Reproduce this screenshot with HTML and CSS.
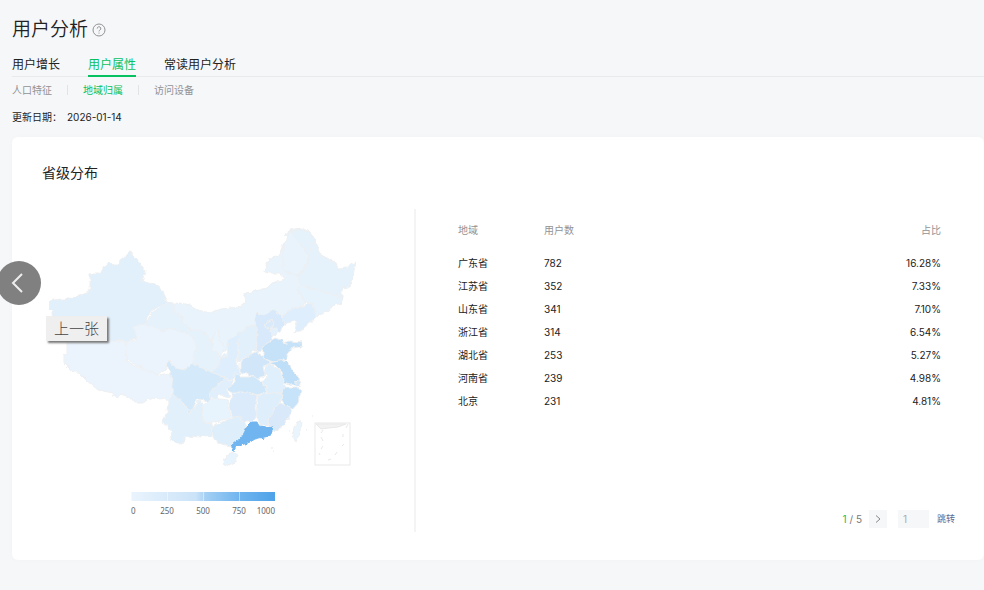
FILE: index.html
```html
<!DOCTYPE html>
<html lang="zh-CN">
<head>
<meta charset="utf-8">
<title>用户分析</title>
<link rel="stylesheet" href="styles.css">
</head>
<body>
<div class="page">
  <header class="page-head">
    <h1>用户分析</h1>
    <svg class="help" viewBox="0 0 14 14" role="img" aria-label="帮助"><circle cx="7" cy="7" r="6"/><path d="M5.2 5.6a1.8 1.8 0 1 1 2.7 1.5c-.6.4-.9.6-.9 1.3"/><path d="M7 9.6v1"/></svg>
  </header>
  <nav class="tabs">
    <a href="#growth">用户增长</a>
    <a href="#attr" class="active">用户属性</a>
    <a href="#regular">常读用户分析</a>
  </nav>
  <nav class="subtabs">
    <a href="#people">人口特征</a>
    <a href="#region" class="active">地域归属</a>
    <a href="#device">访问设备</a>
  </nav>
  <p class="updated"><span>更新日期：</span><time>2026-01-14</time></p>

  <main class="card">
    <h2>省级分布</h2>
    <div class="panes">
      <section class="map-pane">
        <svg class="map" viewBox="42 220 320 252" role="img" aria-label="省级分布地图">
          <defs>
            <filter id="coast" x="0" y="0" width="1" height="1" color-interpolation-filters="sRGB">
              <feTurbulence type="fractalNoise" baseFrequency="0.18" numOctaves="2" seed="4" result="n"/>
              <feDisplacementMap in="SourceGraphic" in2="n" scale="5" xChannelSelector="R" yChannelSelector="G"/>
            </filter>
          </defs>
          <g class="land" filter="url(#coast)">
            <path fill="#e8f3fc" d="M167 303L180 303 190 305 198 310 210 313 220 309 240 307 246 302 244 293 252 292 267 288 272 283 285 279 280 273 270 273 264 272 269 258 278 257 283 245 287 238 284 235 290 230 300 228 311 240 309 265 300 280 306 303 285 315 276 325 260 340 235 350 215 350 190 335 172 328z"/>
            <path fill="#e5f2fb" d="M300 228L310 232 316 243 321 255 335 262 338 268 347 267 356 262 353 275 350 287 342 288 342 298 323 292 300 285 298 277 307 265 309 252 300 241 290 233z"/>
            <path fill="#e8f3fc" d="M290 230L300 243 308 252 307 262 298 276 283 270 283 245 287 238z"/>
            <path fill="#e5f2fb" d="M300 228L310 232 316 243 309 244 311 250 308 255 300 243 290 233z"/>
            <path fill="#e6f2fc" d="M300 285L323 292 342 298 342 303 335 305 327 312 317 317 313 305 305 302 297 288z"/>
            <path fill="#dfeefc" d="M282 317L285 312 305 305 313 303 316 317 305 327 294 333 296 327 297 321 293 320 287 325 283 325z"/>
            <path fill="#e2f0fb" d="M49 303L53 300 62 299 67 299 75 297 87 293 90 287 90 274 101 274 107 263 113 264 119 264 121 257 126 256 128 252 132 253 133 257 141 263 145 272 142 281 155 285 163 291 167 303 155 308 147 317 146 325 133 327 137 337 128 342 110 340 67 341 57 325 53 315 53 310 49 309z"/>
            <path fill="#ebf4fd" d="M67 339L100 338 125 342 126 355 127 362 147 370 160 375 170 373 173 380 173 395 168 402 165 398 160 399 153 397 142 403 135 403 130 397 120 394 115 398 113 393 98 390 87 381 78 372 73 372 64 363 64 355 67 353z"/>
            <path fill="#e5f2fc" d="M147 320L153 312 167 302 173 303 175 313 183 317 182 322 192 330 203 330 206 335 211 343 220 357 228 352 225 365 217 368 213 374 205 370 194 366 186 340 160 330 146 326z"/>
            <path fill="#ebf4fd" d="M133 327L146 324 158 328 162 331 172 328 182 332 193 338 197 345 193 357 194 363 188 370 182 371 173 368 170 361 167 365 165 371 157 374 147 370 127 360 125 343 135 340 136 333z"/>
            <path fill="#e9f4fc" d="M215 332L220 330 219 340 225 347 220 357 213 350 212 340z"/>
            <path fill="#deeefc" d="M238 332L243 331 238 345 237 362 240 373 232 380 225 378 213 373 217 366 220 360 228 357 227 342 232 338z"/>
            <path fill="#e2f0fb" d="M245 328L257 323 257 340 255 350 250 355 238 362 238 345 241 332z"/>
            <path fill="#d7e9fa" d="M257 313L263 315 274 309 277 313 282 318 284 324 280 331 277 332 272 338 263 350 255 351 257 335 255 320z"/>
            <path fill="#d9ebfa" d="M267 322L272 319 274 324 270 329 265 328z"/>
            <path fill="#e4f1fc" d="M271 328L276 327 277 335 272 336z"/>
            <path fill="#c5e2f9" d="M263 348L267 343 275 338 282 340 284 344 290 342 302 343 300 347 292 348 285 357 282 361 273 362 263 358z"/>
            <path fill="#d1e7f9" d="M240 362L250 355 258 351 262 357 272 363 263 367 265 376 257 378 240 372z"/>
            <path fill="#d4e9fa" d="M167 365L169 361 175 368 185 370 193 363 205 369 213 373 225 378 213 390 210 397 212 402 198 399 190 413 182 403 173 395 173 380z"/>
            <path fill="#e2f0fb" d="M170 397L174 394 182 403 190 413 200 400 205 408 203 422 210 422 213 430 212 436 203 437 184 436 184 443 180 444 170 440 172 432 168 426 162 423 167 413 168 403z"/>
            <path fill="#e1effc" d="M225 378L233 382 227 390 230 397 220 395 215 400 208 395 212 390z"/>
            <path fill="#d1e7fa" d="M235 372L240 377 255 377 263 383 267 392 257 395 247 392 230 392 227 388 235 383z"/>
            <path fill="#e0effc" d="M268 363L280 370 283 382 287 388 280 395 268 392 263 382 267 377 263 372z"/>
            <path fill="#bfdff8" d="M268 363L285 360 290 365 293 372 299 378 300 383 293 385 283 382 282 372 275 365z"/>
            <path fill="#d3e8fa" d="M295 380L301 382 300 386 295 385z"/>
            <path fill="#c7e3f9" d="M285 387L298 387 301 392 298 402 292 409 285 405 280 397z"/>
            <path fill="#e8f4fd" d="M202 405L213 398 228 400 231 417 213 423 203 422z"/>
            <path fill="#dbebfb" d="M232 393L247 392 257 395 255 407 257 415 252 422 243 422 240 417 232 417 230 405z"/>
            <path fill="#dfeefb" d="M258 395L272 392 283 395 280 403 273 412 270 425 260 425 256 412z"/>
            <path fill="#d9e9fa" d="M280 403L285 405 292 409 288 420 275 432 268 424 272 412z"/>
            <path fill="#deeefb" d="M212 427L230 418 240 416 246 427 242 437 232 446 217 443 213 437z"/>
            <path fill="#70b5ef" stroke="#70b5ef" d="M252 422L257 422 259 426 266 427 272 426 273 432 268 436 255 439 250 442 235 447 234 452 232 451 232 445 242 437 247 427z"/>
            <path fill="#e7f3fd" d="M226 456L233 453 238 455 234 463 228 466 224 463z"/>
            <path fill="#e9f4fd" d="M299 421L302 422 301 430 296 441 292 436 294 427z"/>
          </g>
          <g class="islands">
            <path d="M272 447v2M273 451h1M312 416h1M289 431h1M306 430h1"/>
            <rect x="315" y="423" width="35" height="42"/>
            <path class="shore" d="M316 424h30l-8 3-10 1-7 1z"/>
            <path d="M348 424l-2 4M323 430l-2 3M321 437l2 4M323 446l-2 3M319 453l1 2M328 460l3-1M335 455l2-3M342 446l2-2M343 437v-3"/>
          </g>
        </svg>
        <div class="legend">
          <div class="legend-bar"><i></i><i></i><i></i><i></i></div>
          <div class="legend-labels"><span>0</span><span>250</span><span>500</span><span>750</span><span>1000</span></div>
        </div>
      </section>
      <section class="table-pane">
        <table>
          <thead><tr><th>地域</th><th>用户数</th><th>占比</th></tr></thead>
          <tbody>
            <tr><td>广东省</td><td>782</td><td>16.28%</td></tr>
            <tr><td>江苏省</td><td>352</td><td>7.33%</td></tr>
            <tr><td>山东省</td><td>341</td><td>7.10%</td></tr>
            <tr><td>浙江省</td><td>314</td><td>6.54%</td></tr>
            <tr><td>湖北省</td><td>253</td><td>5.27%</td></tr>
            <tr><td>河南省</td><td>239</td><td>4.98%</td></tr>
            <tr><td>北京</td><td>231</td><td>4.81%</td></tr>
          </tbody>
        </table>
        <div class="pager">
          <span class="count"><b>1</b> / 5</span>
          <button type="button" class="next" aria-label="下一页"><svg viewBox="0 0 8 10"><path d="M2 1.500L6 5 2 8.500"/></svg></button>
          <input type="text" value="1" aria-label="页码">
          <a href="#jump">跳转</a>
        </div>
      </section>
    </div>
  </main>
  <button type="button" class="prev" aria-label="上一张" aria-describedby="tip"><svg viewBox="0 0 12 22"><path d="M11 2L2 11l9 9"/></svg></button>
  <div class="tooltip" role="tooltip" id="tip">上一张</div>
</div>
</body>
</html>
```
FILE: styles.css
```css
* { box-sizing: border-box; }
body {
  margin: 0;
  min-height: 100vh;
  background: #f6f7f9;
  color: #222;
  font: 10px/20px Inter, "Noto Sans CJK SC", sans-serif;
}
h1, h2, p { margin: 0; font-weight: 400; }
a { color: inherit; text-decoration: none; }
.page { position: relative; padding: 17px 0 30px 12px; overflow: hidden; }
.page-head { display: flex; align-items: center; gap: 4px; }
h1 { font-size: 19px; line-height: 26px; font-weight: 350; }
.help { width: 14px; height: 14px; fill: none; stroke: #929395; stroke-width: 1; }
.tabs { display: flex; gap: 28px; margin-top: 12px; border-bottom: 1px solid #e9eaec; font-size: 12px; line-height: 20px; }
.tabs a { margin-bottom: -1px; border-bottom: 2px solid transparent; }
.tabs .active { color: #07c160; border-color: #07c160; }
.subtabs { display: flex; margin-top: 3px; color: #929395; }
.subtabs a { display: flex; align-items: center; }
.subtabs a + a::before { content: ""; width: 1px; height: 10px; margin: 0 15px; background: #e2e3e5; }
.subtabs .active { color: #07c160; }
.updated { display: flex; gap: 5px; margin-top: 7px; }
.card { margin-top: 10px; padding: 26px 0 28px; background: #fff; border-radius: 6px; box-shadow: 0 0 6px rgba(0, 0, 0, .02); }
h2 { padding-left: 30px; font-size: 14px; line-height: 20px; }
.panes { display: grid; grid-template-columns: 402fr 570fr; margin-top: 26px; }
.map-pane { padding: 11px 40px 0 30px; }
.map { display: block; width: 100%; max-width: 320px; }
.land { stroke: #eeeff0; stroke-width: 1; stroke-linejoin: round; }
.islands { fill: none; stroke: #e9e9e9; stroke-width: 1; }
.islands .shore { fill: #f2f2f2; }
.legend { width: 144px; margin: 20px 0 0 89px; }
.legend-bar { display: grid; grid-template-columns: repeat(4, 1fr); height: 9px; background: linear-gradient(90deg, #eaf4fd, #cbe3f8 45%, #a3cff4 52%, #70b5ef 75%, #4ea2e8); }
.legend-bar i { border-left: 1px solid rgba(255, 255, 255, .45); }
.legend-labels { display: grid; grid-template-columns: repeat(8, minmax(0, 1fr)); color: #666; font: 8px/20px "Noto Sans", sans-serif; }
.legend-labels span { grid-column: span 2; justify-self: center; }
.legend-labels span:first-child { grid-column: span 1; justify-self: start; }
.legend-labels span:last-child { grid-column: span 1; justify-self: end; }
.table-pane { display: flex; flex-direction: column; justify-content: space-between; min-height: 323px; padding: 10px 29px 4px 42px; border-left: 2px solid #f4f4f5; }
table { width: 100%; border-spacing: 0; table-layout: fixed; }
th, td { height: 23px; padding: 0; font-weight: 400; text-align: left; }
th { height: 32px; padding-bottom: 10px; color: #929395; }
th:first-child { width: 86px; }
th:last-child, td:last-child { padding-right: 14px; text-align: right; }
.pager { display: flex; align-items: center; justify-content: flex-end; color: #777; line-height: 18px; }
.pager b { color: #07c160; font-weight: 400; }
.next { display: grid; place-items: center; width: 18px; height: 18px; margin: 0 11px 0 7px; padding: 0; border: 0; background: #f6f7f8; }
.next svg { width: 8px; height: 10px; fill: none; stroke: #888; }
.pager input { width: 31px; height: 18px; padding: 0 5px; border: 0; background: #f6f7f8; color: #aaa; font: inherit; }
.pager a { margin-left: 8px; color: #576b95; font-size: 9px; }
.prev { position: absolute; top: 261px; left: -3px; display: grid; place-items: center; width: 44px; height: 44px; padding: 0 4px 0 0; border: 0; border-radius: 50%; background: #808080; }
.prev svg { width: 12px; height: 22px; fill: none; stroke: #eee; stroke-width: 2; }
.tooltip { position: absolute; top: 316px; left: 46px; padding: 0 8px; background: #efefef; color: #444; font-size: 15px; font-weight: 300; line-height: 25px; box-shadow: 2px 2px 2px #777; }
```
